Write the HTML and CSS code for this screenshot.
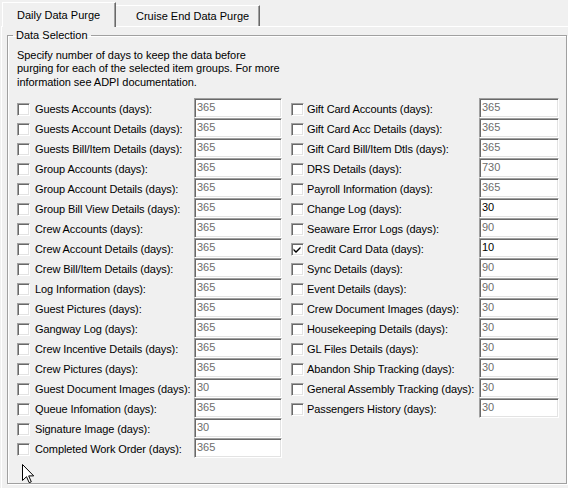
FILE: index.html
```
<!DOCTYPE html>
<html>
<head>
<meta charset="utf-8">
<link rel="stylesheet" href="styles.css">
</head>
<body>
<div class="window">
  <div class="tabs">
    <div class="tab active">Daily Data Purge</div>
    <div class="tab inactive">Cruise End Data Purge</div>
  </div>
  <div class="panel">
    <fieldset class="group">
      <legend>Data Selection</legend>
      <p class="desc">Specify number of days to keep the data before<br>purging for each of the selected item groups. For more<br>information see ADPI documentation.</p>
      <div class="cols">
        <div class="col col-left">
          <div class="row"><span class="cb"></span><span class="lbl">Guests Accounts (days):</span><span class="tb">365</span></div>
          <div class="row"><span class="cb"></span><span class="lbl">Guests Account Details (days):</span><span class="tb">365</span></div>
          <div class="row"><span class="cb"></span><span class="lbl">Guests Bill/Item Details (days):</span><span class="tb">365</span></div>
          <div class="row"><span class="cb"></span><span class="lbl">Group Accounts (days):</span><span class="tb">365</span></div>
          <div class="row"><span class="cb"></span><span class="lbl">Group Account Details (days):</span><span class="tb">365</span></div>
          <div class="row"><span class="cb"></span><span class="lbl">Group Bill View Details (days):</span><span class="tb">365</span></div>
          <div class="row"><span class="cb"></span><span class="lbl">Crew Accounts (days):</span><span class="tb">365</span></div>
          <div class="row"><span class="cb"></span><span class="lbl">Crew Account Details (days):</span><span class="tb">365</span></div>
          <div class="row"><span class="cb"></span><span class="lbl">Crew Bill/Item Details (days):</span><span class="tb">365</span></div>
          <div class="row"><span class="cb"></span><span class="lbl">Log Information (days):</span><span class="tb">365</span></div>
          <div class="row"><span class="cb"></span><span class="lbl">Guest Pictures (days):</span><span class="tb">365</span></div>
          <div class="row"><span class="cb"></span><span class="lbl">Gangway Log (days):</span><span class="tb">365</span></div>
          <div class="row"><span class="cb"></span><span class="lbl">Crew Incentive Details (days):</span><span class="tb">365</span></div>
          <div class="row"><span class="cb"></span><span class="lbl">Crew Pictures (days):</span><span class="tb">365</span></div>
          <div class="row"><span class="cb"></span><span class="lbl">Guest Document Images (days):</span><span class="tb">30</span></div>
          <div class="row"><span class="cb"></span><span class="lbl">Queue Infomation (days):</span><span class="tb">365</span></div>
          <div class="row"><span class="cb"></span><span class="lbl">Signature Image (days):</span><span class="tb">30</span></div>
          <div class="row"><span class="cb"></span><span class="lbl">Completed Work Order (days):</span><span class="tb">365</span></div>
        </div>
        <div class="col col-right">
          <div class="row"><span class="cb"></span><span class="lbl">Gift Card Accounts (days):</span><span class="tb">365</span></div>
          <div class="row"><span class="cb"></span><span class="lbl">Gift Card Acc Details (days):</span><span class="tb">365</span></div>
          <div class="row"><span class="cb"></span><span class="lbl">Gift Card Bill/Item Dtls (days):</span><span class="tb">365</span></div>
          <div class="row"><span class="cb"></span><span class="lbl">DRS Details (days):</span><span class="tb">730</span></div>
          <div class="row"><span class="cb"></span><span class="lbl">Payroll Information (days):</span><span class="tb">365</span></div>
          <div class="row"><span class="cb"></span><span class="lbl">Change Log (days):</span><span class="tb on">30</span></div>
          <div class="row"><span class="cb"></span><span class="lbl">Seaware Error Logs (days):</span><span class="tb">90</span></div>
          <div class="row"><span class="cb checked"><svg viewBox="0 0 11 11" width="11" height="11"><path d="M1.5 4.5 L4 7 L8.5 2.5 L8.5 4.5 L4 9 L1.5 6.5 Z" fill="#000"/></svg></span><span class="lbl">Credit Card Data (days):</span><span class="tb on">10</span></div>
          <div class="row"><span class="cb"></span><span class="lbl">Sync Details (days):</span><span class="tb">90</span></div>
          <div class="row"><span class="cb"></span><span class="lbl">Event Details (days):</span><span class="tb">90</span></div>
          <div class="row"><span class="cb"></span><span class="lbl">Crew Document Images (days):</span><span class="tb">30</span></div>
          <div class="row"><span class="cb"></span><span class="lbl">Housekeeping Details (days):</span><span class="tb">30</span></div>
          <div class="row"><span class="cb"></span><span class="lbl">GL Files Details (days):</span><span class="tb">30</span></div>
          <div class="row"><span class="cb"></span><span class="lbl">Abandon Ship Tracking (days):</span><span class="tb">30</span></div>
          <div class="row"><span class="cb"></span><span class="lbl">General Assembly Tracking (days):</span><span class="tb">30</span></div>
          <div class="row"><span class="cb"></span><span class="lbl">Passengers History (days):</span><span class="tb">30</span></div>
        </div>
      </div>
    </fieldset>
  </div>
  <svg class="cursor" width="13" height="20" viewBox="0 0 13 20"><path d="M0.5 0.5 L0.5 16.5 L4.5 12.7 L7.2 18.7 L9.3 17.8 L6.7 11.9 L11.7 11.9 Z" fill="#fff" stroke="#000" stroke-width="1" stroke-linejoin="miter"/></svg>
</div>
</body>
</html>
```
FILE: styles.css
```
html, body {
  margin: 0;
  padding: 0;
  background: #f0f0f0;
}
body {
  font-family: "Liberation Sans", Arial, sans-serif;
  font-size: 11px;
  color: #000;
}
.window {
  position: relative;
  width: 568px;
  height: 488px;
  display: flex;
  flex-direction: column;
  overflow: hidden;
}
.tabs {
  display: flex;
  align-items: flex-end;
  height: 26px;
  padding-left: 2px;
  position: relative;
  z-index: 2;
}
.tab {
  box-sizing: border-box;
  display: flex;
  align-items: center;
  background: #f0f0f0;
  border-top: 1px solid #fff;
  border-left: 1px solid #fff;
  border-right: 1px solid #696969;
  box-shadow: inset -1px 0 0 #a0a0a0;
  white-space: nowrap;
}
.tab.active {
  height: 25px;
  width: 114px;
  padding-left: 14px;
  padding-bottom: 1px;
  margin-bottom: -1px;
}
.tab.inactive {
  height: 21px;
  width: 144px;
  padding-left: 20px;
  border-left: none;
}
.panel {
  flex: 1;
  display: flex;
  flex-direction: column;
  border-top: 1px solid #fff;
  border-left: 1px solid #fff;
  margin-left: 1px;
}
.group {
  flex: 1;
  margin: 2px 1px 4px 5px;
  padding: 0 0 0 9px;
  border: 1px solid #a0a0a0;
  box-shadow: inset 1px 1px 0 #fff, 1px 1px 0 #fff;
  min-width: 0;
}
.group legend {
  margin-left: -4px;
  padding: 0 3px;
  line-height: 13px;
}
.desc {
  margin: 7px 0 0 0;
  line-height: 13.4px;
  letter-spacing: -0.05px;
}
.cols {
  display: flex;
  margin-top: 9px;
}
.col {
  display: flex;
  flex-direction: column;
}
.col-left {
  width: 265px;
}
.col-right {
  width: 268px;
  margin-left: 9px;
}
.row {
  display: flex;
  align-items: center;
  height: 20px;
}
.cb {
  box-sizing: border-box;
  width: 13px;
  height: 13px;
  flex: none;
  background: #fff;
  border-top: 1px solid #a0a0a0;
  border-left: 1px solid #a0a0a0;
  border-right: 1px solid #fff;
  border-bottom: 1px solid #fff;
  box-shadow: inset 1px 1px 0 #696969, inset -1px -1px 0 #e3e3e3;
  margin-top: 2px;
  display: flex;
  align-items: center;
  justify-content: center;
}
.cb svg {
  display: block;
}
.lbl {
  flex: 1;
  white-space: nowrap;
  margin-left: 5px;
  padding-top: 2px;
  letter-spacing: -0.1px;
}
.col-right .lbl {
  margin-left: 3px;
}
.tb {
  box-sizing: border-box;
  flex: none;
  width: 88px;
  height: 20px;
  background: #fff;
  border-top: 1px solid #a0a0a0;
  border-left: 1px solid #a0a0a0;
  border-right: 1px solid #fff;
  border-bottom: 1px solid #fff;
  box-shadow: inset 1px 1px 0 #696969, inset -1px -1px 0 #e3e3e3;
  padding: 1px 0 0 2px;
  line-height: 15px;
  color: #6d6d6d;
}
.col-right .tb {
  width: 80px;
}
.tb.on {
  color: #000;
}
.cursor {
  position: absolute;
  left: 22px;
  top: 464px;
}
```
